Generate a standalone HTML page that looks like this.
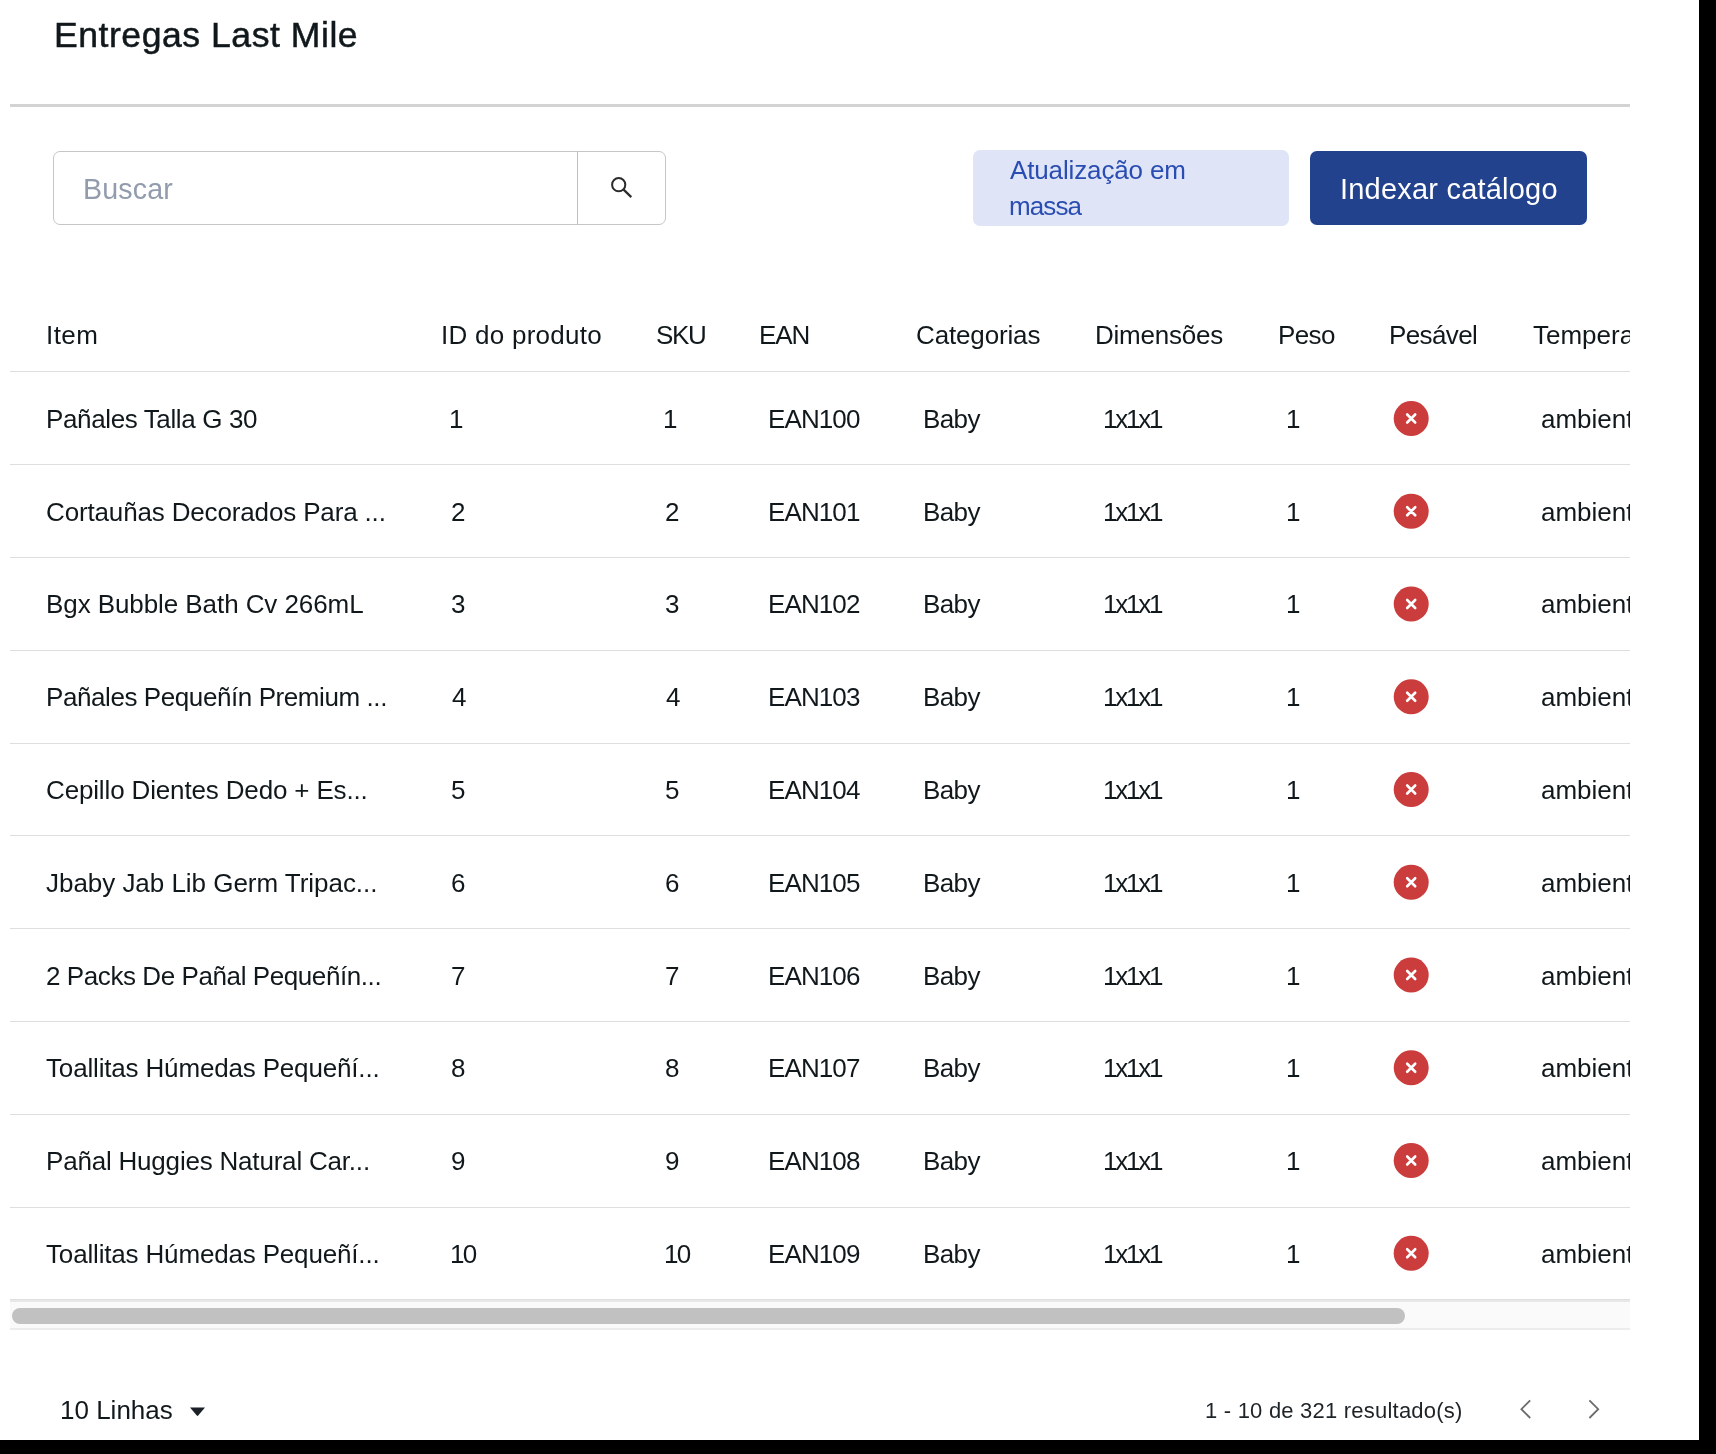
<!DOCTYPE html>
<html><head><meta charset="utf-8"><title>Entregas Last Mile</title>
<style>
html,body{margin:0;padding:0;background:#fff;}
body{width:1716px;height:1454px;position:relative;overflow:hidden;font-family:"Liberation Sans",sans-serif;}
.t{position:absolute;white-space:nowrap;will-change:transform;}
</style></head><body>
<div id="title" class="t" style="left:53.90px;top:14.46px;font-size:35.6px;line-height:43px;color:#11181c;letter-spacing:0.529px;-webkit-text-stroke:0.5px #11181c;">Entregas Last Mile</div>
<div style="position:absolute;left:10px;top:104px;width:1620px;height:3px;background:#d3d3d3"></div>
<div style="position:absolute;left:53px;top:151px;width:611px;height:72px;border:1px solid #c6c6c6;border-radius:7px"></div>
<div style="position:absolute;left:577px;top:151px;width:1px;height:74px;background:#bfbfbf"></div>
<div id="buscar" class="t" style="left:83.00px;top:172.08px;font-size:28.6px;line-height:34px;color:#929cad;letter-spacing:0.180px;">Buscar</div>
<svg style="position:absolute;left:600px;top:166px" width="40" height="40" viewBox="600 166 40 40"><circle cx="618.7" cy="184.7" r="6.6" fill="none" stroke="#2b2b2b" stroke-width="2"/><line x1="623.6" y1="189.6" x2="631.3" y2="197.1" stroke="#2b2b2b" stroke-width="2.2"/></svg>
<div style="position:absolute;left:973px;top:150px;width:316px;height:76px;background:#dfe5f6;border-radius:7px"></div>
<div id="atu1" class="t" style="left:1010.25px;top:155.49px;font-size:26px;line-height:31px;color:#2a4db2;letter-spacing:-0.138px;">Atualização em</div>
<div id="atu2" class="t" style="left:1009.35px;top:191.49px;font-size:26px;line-height:31px;color:#2a4db2;letter-spacing:-0.900px;">massa</div>
<div style="position:absolute;left:1310px;top:151px;width:277px;height:74px;background:#22428e;border-radius:7px"></div>
<div id="idx" class="t" style="left:1340.00px;top:172.45px;font-size:29px;line-height:35px;color:#ffffff;letter-spacing:0.210px;">Indexar catálogo</div>
<div style="position:absolute;left:10px;top:0;width:1620px;height:1340px;overflow:hidden">
<div id="h_item" class="t" style="left:35.55px;top:320.49px;font-size:26px;line-height:31px;color:#11181c;letter-spacing:0.450px;">Item</div>
<div id="h_id" class="t" style="left:431.00px;top:320.49px;font-size:26px;line-height:31px;color:#11181c;letter-spacing:0.262px;">ID do produto</div>
<div id="h_sku" class="t" style="left:645.90px;top:320.49px;font-size:26px;line-height:31px;color:#11181c;letter-spacing:-1.350px;">SKU</div>
<div id="h_ean" class="t" style="left:749.45px;top:320.49px;font-size:26px;line-height:31px;color:#11181c;letter-spacing:-1.125px;">EAN</div>
<div id="h_cat" class="t" style="left:905.80px;top:320.49px;font-size:26px;line-height:31px;color:#11181c;letter-spacing:-0.150px;">Categorias</div>
<div id="h_dim" class="t" style="left:1085.00px;top:320.49px;font-size:26px;line-height:31px;color:#11181c;letter-spacing:-0.225px;">Dimensões</div>
<div id="h_peso" class="t" style="left:1267.90px;top:320.49px;font-size:26px;line-height:31px;color:#11181c;letter-spacing:-0.600px;">Peso</div>
<div id="h_pes" class="t" style="left:1379.00px;top:320.49px;font-size:26px;line-height:31px;color:#11181c;letter-spacing:-0.600px;">Pesável</div>
<div id="h_temp" class="t" style="left:1522.80px;top:320.49px;font-size:26px;line-height:31px;color:#11181c;">Temperatura</div>
<div style="position:absolute;left:0;top:371px;width:1620px;height:1px;background:#dedede"></div>
<div id="r0_name" class="t" style="left:36.00px;top:403.99px;font-size:26px;line-height:31px;color:#11181c;letter-spacing:-0.371px;">Pañales Talla G 30</div>
<div id="r0_id" class="t" style="left:439.10px;top:403.99px;font-size:26px;line-height:31px;color:#11181c;">1</div>
<div id="r0_sku" class="t" style="left:653.10px;top:403.99px;font-size:26px;line-height:31px;color:#11181c;">1</div>
<div id="r0_ean" class="t" style="left:758.45px;top:403.99px;font-size:26px;line-height:31px;color:#11181c;letter-spacing:-0.900px;">EAN100</div>
<div id="r0_cat" class="t" style="left:913.45px;top:403.99px;font-size:26px;line-height:31px;color:#11181c;letter-spacing:-0.600px;">Baby</div>
<div id="r0_dim" class="t" style="left:1093.00px;top:403.99px;font-size:26px;line-height:31px;color:#11181c;letter-spacing:-2.250px;">1x1x1</div>
<div id="r0_peso" class="t" style="left:1276.10px;top:403.99px;font-size:26px;line-height:31px;color:#11181c;">1</div>
<div id="r0_amb" class="t" style="left:1530.90px;top:403.99px;font-size:26px;line-height:31px;color:#11181c;">ambiente</div>
<div style="position:absolute;left:0;top:464px;width:1620px;height:1px;background:#dedede"></div>
<div id="r1_name" class="t" style="left:36.00px;top:496.74px;font-size:26px;line-height:31px;color:#11181c;letter-spacing:-0.150px;">Cortauñas Decorados Para ...</div>
<div id="r1_id" class="t" style="left:441.44px;top:496.74px;font-size:26px;line-height:31px;color:#11181c;">2</div>
<div id="r1_sku" class="t" style="left:655.44px;top:496.74px;font-size:26px;line-height:31px;color:#11181c;">2</div>
<div id="r1_ean" class="t" style="left:758.45px;top:496.74px;font-size:26px;line-height:31px;color:#11181c;letter-spacing:-0.900px;">EAN101</div>
<div id="r1_cat" class="t" style="left:913.45px;top:496.74px;font-size:26px;line-height:31px;color:#11181c;letter-spacing:-0.600px;">Baby</div>
<div id="r1_dim" class="t" style="left:1093.00px;top:496.74px;font-size:26px;line-height:31px;color:#11181c;letter-spacing:-2.250px;">1x1x1</div>
<div id="r1_peso" class="t" style="left:1276.10px;top:496.74px;font-size:26px;line-height:31px;color:#11181c;">1</div>
<div id="r1_amb" class="t" style="left:1530.90px;top:496.74px;font-size:26px;line-height:31px;color:#11181c;">ambiente</div>
<div style="position:absolute;left:0;top:557px;width:1620px;height:1px;background:#dedede"></div>
<div id="r2_name" class="t" style="left:36.00px;top:589.49px;font-size:26px;line-height:31px;color:#11181c;letter-spacing:-0.078px;">Bgx Bubble Bath Cv 266mL</div>
<div id="r2_id" class="t" style="left:441.44px;top:589.49px;font-size:26px;line-height:31px;color:#11181c;">3</div>
<div id="r2_sku" class="t" style="left:655.44px;top:589.49px;font-size:26px;line-height:31px;color:#11181c;">3</div>
<div id="r2_ean" class="t" style="left:758.45px;top:589.49px;font-size:26px;line-height:31px;color:#11181c;letter-spacing:-0.900px;">EAN102</div>
<div id="r2_cat" class="t" style="left:913.45px;top:589.49px;font-size:26px;line-height:31px;color:#11181c;letter-spacing:-0.600px;">Baby</div>
<div id="r2_dim" class="t" style="left:1093.00px;top:589.49px;font-size:26px;line-height:31px;color:#11181c;letter-spacing:-2.250px;">1x1x1</div>
<div id="r2_peso" class="t" style="left:1276.10px;top:589.49px;font-size:26px;line-height:31px;color:#11181c;">1</div>
<div id="r2_amb" class="t" style="left:1530.90px;top:589.49px;font-size:26px;line-height:31px;color:#11181c;">ambiente</div>
<div style="position:absolute;left:0;top:650px;width:1620px;height:1px;background:#dedede"></div>
<div id="r3_name" class="t" style="left:36.00px;top:682.24px;font-size:26px;line-height:31px;color:#11181c;letter-spacing:-0.417px;">Pañales Pequeñín Premium ...</div>
<div id="r3_id" class="t" style="left:442.34px;top:682.24px;font-size:26px;line-height:31px;color:#11181c;">4</div>
<div id="r3_sku" class="t" style="left:656.34px;top:682.24px;font-size:26px;line-height:31px;color:#11181c;">4</div>
<div id="r3_ean" class="t" style="left:758.45px;top:682.24px;font-size:26px;line-height:31px;color:#11181c;letter-spacing:-0.900px;">EAN103</div>
<div id="r3_cat" class="t" style="left:913.45px;top:682.24px;font-size:26px;line-height:31px;color:#11181c;letter-spacing:-0.600px;">Baby</div>
<div id="r3_dim" class="t" style="left:1093.00px;top:682.24px;font-size:26px;line-height:31px;color:#11181c;letter-spacing:-2.250px;">1x1x1</div>
<div id="r3_peso" class="t" style="left:1276.10px;top:682.24px;font-size:26px;line-height:31px;color:#11181c;">1</div>
<div id="r3_amb" class="t" style="left:1530.90px;top:682.24px;font-size:26px;line-height:31px;color:#11181c;">ambiente</div>
<div style="position:absolute;left:0;top:743px;width:1620px;height:1px;background:#dedede"></div>
<div id="r4_name" class="t" style="left:36.00px;top:774.99px;font-size:26px;line-height:31px;color:#11181c;letter-spacing:-0.150px;">Cepillo Dientes Dedo + Es...</div>
<div id="r4_id" class="t" style="left:441.44px;top:774.99px;font-size:26px;line-height:31px;color:#11181c;">5</div>
<div id="r4_sku" class="t" style="left:655.44px;top:774.99px;font-size:26px;line-height:31px;color:#11181c;">5</div>
<div id="r4_ean" class="t" style="left:758.45px;top:774.99px;font-size:26px;line-height:31px;color:#11181c;letter-spacing:-0.900px;">EAN104</div>
<div id="r4_cat" class="t" style="left:913.45px;top:774.99px;font-size:26px;line-height:31px;color:#11181c;letter-spacing:-0.600px;">Baby</div>
<div id="r4_dim" class="t" style="left:1093.00px;top:774.99px;font-size:26px;line-height:31px;color:#11181c;letter-spacing:-2.250px;">1x1x1</div>
<div id="r4_peso" class="t" style="left:1276.10px;top:774.99px;font-size:26px;line-height:31px;color:#11181c;">1</div>
<div id="r4_amb" class="t" style="left:1530.90px;top:774.99px;font-size:26px;line-height:31px;color:#11181c;">ambiente</div>
<div style="position:absolute;left:0;top:835px;width:1620px;height:1px;background:#dedede"></div>
<div id="r5_name" class="t" style="left:36.00px;top:867.74px;font-size:26px;line-height:31px;color:#11181c;letter-spacing:-0.033px;">Jbaby Jab Lib Germ Tripac...</div>
<div id="r5_id" class="t" style="left:441.44px;top:867.74px;font-size:26px;line-height:31px;color:#11181c;">6</div>
<div id="r5_sku" class="t" style="left:655.44px;top:867.74px;font-size:26px;line-height:31px;color:#11181c;">6</div>
<div id="r5_ean" class="t" style="left:758.45px;top:867.74px;font-size:26px;line-height:31px;color:#11181c;letter-spacing:-0.900px;">EAN105</div>
<div id="r5_cat" class="t" style="left:913.45px;top:867.74px;font-size:26px;line-height:31px;color:#11181c;letter-spacing:-0.600px;">Baby</div>
<div id="r5_dim" class="t" style="left:1093.00px;top:867.74px;font-size:26px;line-height:31px;color:#11181c;letter-spacing:-2.250px;">1x1x1</div>
<div id="r5_peso" class="t" style="left:1276.10px;top:867.74px;font-size:26px;line-height:31px;color:#11181c;">1</div>
<div id="r5_amb" class="t" style="left:1530.90px;top:867.74px;font-size:26px;line-height:31px;color:#11181c;">ambiente</div>
<div style="position:absolute;left:0;top:928px;width:1620px;height:1px;background:#dedede"></div>
<div id="r6_name" class="t" style="left:36.00px;top:961.09px;font-size:26px;line-height:31px;color:#11181c;letter-spacing:-0.417px;">2 Packs De Pañal Pequeñín...</div>
<div id="r6_id" class="t" style="left:441.44px;top:961.09px;font-size:26px;line-height:31px;color:#11181c;">7</div>
<div id="r6_sku" class="t" style="left:655.44px;top:961.09px;font-size:26px;line-height:31px;color:#11181c;">7</div>
<div id="r6_ean" class="t" style="left:758.45px;top:961.09px;font-size:26px;line-height:31px;color:#11181c;letter-spacing:-0.900px;">EAN106</div>
<div id="r6_cat" class="t" style="left:913.45px;top:961.09px;font-size:26px;line-height:31px;color:#11181c;letter-spacing:-0.600px;">Baby</div>
<div id="r6_dim" class="t" style="left:1093.00px;top:961.09px;font-size:26px;line-height:31px;color:#11181c;letter-spacing:-2.250px;">1x1x1</div>
<div id="r6_peso" class="t" style="left:1276.10px;top:961.09px;font-size:26px;line-height:31px;color:#11181c;">1</div>
<div id="r6_amb" class="t" style="left:1530.90px;top:961.09px;font-size:26px;line-height:31px;color:#11181c;">ambiente</div>
<div style="position:absolute;left:0;top:1021px;width:1620px;height:1px;background:#dedede"></div>
<div id="r7_name" class="t" style="left:36.00px;top:1053.24px;font-size:26px;line-height:31px;color:#11181c;letter-spacing:-0.167px;">Toallitas Húmedas Pequeñí...</div>
<div id="r7_id" class="t" style="left:441.44px;top:1053.24px;font-size:26px;line-height:31px;color:#11181c;">8</div>
<div id="r7_sku" class="t" style="left:655.44px;top:1053.24px;font-size:26px;line-height:31px;color:#11181c;">8</div>
<div id="r7_ean" class="t" style="left:758.45px;top:1053.24px;font-size:26px;line-height:31px;color:#11181c;letter-spacing:-0.900px;">EAN107</div>
<div id="r7_cat" class="t" style="left:913.45px;top:1053.24px;font-size:26px;line-height:31px;color:#11181c;letter-spacing:-0.600px;">Baby</div>
<div id="r7_dim" class="t" style="left:1093.00px;top:1053.24px;font-size:26px;line-height:31px;color:#11181c;letter-spacing:-2.250px;">1x1x1</div>
<div id="r7_peso" class="t" style="left:1276.10px;top:1053.24px;font-size:26px;line-height:31px;color:#11181c;">1</div>
<div id="r7_amb" class="t" style="left:1530.90px;top:1053.24px;font-size:26px;line-height:31px;color:#11181c;">ambiente</div>
<div style="position:absolute;left:0;top:1114px;width:1620px;height:1px;background:#dedede"></div>
<div id="r8_name" class="t" style="left:36.00px;top:1145.99px;font-size:26px;line-height:31px;color:#11181c;letter-spacing:-0.200px;">Pañal Huggies Natural Car...</div>
<div id="r8_id" class="t" style="left:441.44px;top:1145.99px;font-size:26px;line-height:31px;color:#11181c;">9</div>
<div id="r8_sku" class="t" style="left:655.44px;top:1145.99px;font-size:26px;line-height:31px;color:#11181c;">9</div>
<div id="r8_ean" class="t" style="left:758.45px;top:1145.99px;font-size:26px;line-height:31px;color:#11181c;letter-spacing:-0.900px;">EAN108</div>
<div id="r8_cat" class="t" style="left:913.45px;top:1145.99px;font-size:26px;line-height:31px;color:#11181c;letter-spacing:-0.600px;">Baby</div>
<div id="r8_dim" class="t" style="left:1093.00px;top:1145.99px;font-size:26px;line-height:31px;color:#11181c;letter-spacing:-2.250px;">1x1x1</div>
<div id="r8_peso" class="t" style="left:1276.10px;top:1145.99px;font-size:26px;line-height:31px;color:#11181c;">1</div>
<div id="r8_amb" class="t" style="left:1530.90px;top:1145.99px;font-size:26px;line-height:31px;color:#11181c;">ambiente</div>
<div style="position:absolute;left:0;top:1207px;width:1620px;height:1px;background:#dedede"></div>
<div id="r9_name" class="t" style="left:36.00px;top:1238.74px;font-size:26px;line-height:31px;color:#11181c;letter-spacing:-0.167px;">Toallitas Húmedas Pequeñí...</div>
<div id="r9_id" class="t" style="left:440.00px;top:1238.74px;font-size:26px;line-height:31px;color:#11181c;letter-spacing:-1.800px;">10</div>
<div id="r9_sku" class="t" style="left:654.00px;top:1238.74px;font-size:26px;line-height:31px;color:#11181c;letter-spacing:-1.800px;">10</div>
<div id="r9_ean" class="t" style="left:758.45px;top:1238.74px;font-size:26px;line-height:31px;color:#11181c;letter-spacing:-0.900px;">EAN109</div>
<div id="r9_cat" class="t" style="left:913.45px;top:1238.74px;font-size:26px;line-height:31px;color:#11181c;letter-spacing:-0.600px;">Baby</div>
<div id="r9_dim" class="t" style="left:1093.00px;top:1238.74px;font-size:26px;line-height:31px;color:#11181c;letter-spacing:-2.250px;">1x1x1</div>
<div id="r9_peso" class="t" style="left:1276.10px;top:1238.74px;font-size:26px;line-height:31px;color:#11181c;">1</div>
<div id="r9_amb" class="t" style="left:1530.90px;top:1238.74px;font-size:26px;line-height:31px;color:#11181c;">ambiente</div>
</div>
<div style="position:absolute;left:10px;top:1299px;width:1620px;height:31px;background:#fafafa;border-top:1px solid #dedede;box-sizing:border-box"></div>
<div style="position:absolute;left:10px;top:1300px;width:1620px;height:2px;background:#e8e8e8"></div>
<div style="position:absolute;left:10px;top:1328px;width:1620px;height:2px;background:#ececec"></div>
<div style="position:absolute;left:12px;top:1308px;width:1393px;height:16px;background:#c1c1c1;border-radius:8px"></div>
<div id="linhas" class="t" style="left:60.00px;top:1395.49px;font-size:26px;line-height:31px;color:#11181c;">10 Linhas</div>
<svg style="position:absolute;left:188px;top:1405px" width="20" height="14" viewBox="0 0 20 14"><path d="M2 2.5 L17 2.5 L10.2 10.5 Q9.5 11.3 8.8 10.5 Z" fill="#1b2126"/></svg>
<div id="res" class="t" style="left:1205.00px;top:1398.37px;font-size:22px;line-height:26px;color:#1d2327;letter-spacing:0.216px;">1 - 10 de 321 resultado(s)</div>
<svg style="position:absolute;left:1510px;top:1390px" width="100" height="40" viewBox="1510 1390 100 40"><path d="M1530.2 1400.4L1521.4 1409.2L1530.2 1418" fill="none" stroke="#6b6b6b" stroke-width="1.8"/><path d="M1589.4 1400.4L1598.2 1409.2L1589.4 1418" fill="none" stroke="#6b6b6b" stroke-width="1.8"/></svg>
<svg style="position:absolute;left:0;top:0" width="1716" height="1454" viewBox="0 0 1716 1454"><circle cx="1411.2" cy="418.50" r="17.5" fill="#cb3c3c"/><path d="M1407.2 414.50L1415.2 422.50M1415.2 414.50L1407.2 422.50" stroke="#fff" stroke-width="2.6" stroke-linecap="round"/><circle cx="1411.2" cy="511.25" r="17.5" fill="#cb3c3c"/><path d="M1407.2 507.25L1415.2 515.25M1415.2 507.25L1407.2 515.25" stroke="#fff" stroke-width="2.6" stroke-linecap="round"/><circle cx="1411.2" cy="604.00" r="17.5" fill="#cb3c3c"/><path d="M1407.2 600.00L1415.2 608.00M1415.2 600.00L1407.2 608.00" stroke="#fff" stroke-width="2.6" stroke-linecap="round"/><circle cx="1411.2" cy="696.75" r="17.5" fill="#cb3c3c"/><path d="M1407.2 692.75L1415.2 700.75M1415.2 692.75L1407.2 700.75" stroke="#fff" stroke-width="2.6" stroke-linecap="round"/><circle cx="1411.2" cy="789.50" r="17.5" fill="#cb3c3c"/><path d="M1407.2 785.50L1415.2 793.50M1415.2 785.50L1407.2 793.50" stroke="#fff" stroke-width="2.6" stroke-linecap="round"/><circle cx="1411.2" cy="882.25" r="17.5" fill="#cb3c3c"/><path d="M1407.2 878.25L1415.2 886.25M1415.2 878.25L1407.2 886.25" stroke="#fff" stroke-width="2.6" stroke-linecap="round"/><circle cx="1411.2" cy="975.00" r="17.5" fill="#cb3c3c"/><path d="M1407.2 971.00L1415.2 979.00M1415.2 971.00L1407.2 979.00" stroke="#fff" stroke-width="2.6" stroke-linecap="round"/><circle cx="1411.2" cy="1067.75" r="17.5" fill="#cb3c3c"/><path d="M1407.2 1063.75L1415.2 1071.75M1415.2 1063.75L1407.2 1071.75" stroke="#fff" stroke-width="2.6" stroke-linecap="round"/><circle cx="1411.2" cy="1160.50" r="17.5" fill="#cb3c3c"/><path d="M1407.2 1156.50L1415.2 1164.50M1415.2 1156.50L1407.2 1164.50" stroke="#fff" stroke-width="2.6" stroke-linecap="round"/><circle cx="1411.2" cy="1253.25" r="17.5" fill="#cb3c3c"/><path d="M1407.2 1249.25L1415.2 1257.25M1415.2 1249.25L1407.2 1257.25" stroke="#fff" stroke-width="2.6" stroke-linecap="round"/></svg>
<div style="position:absolute;left:1699px;top:0;width:17px;height:1454px;background:#000"></div>
<div style="position:absolute;left:0;top:1440px;width:1716px;height:14px;background:#000"></div>
</body></html>
